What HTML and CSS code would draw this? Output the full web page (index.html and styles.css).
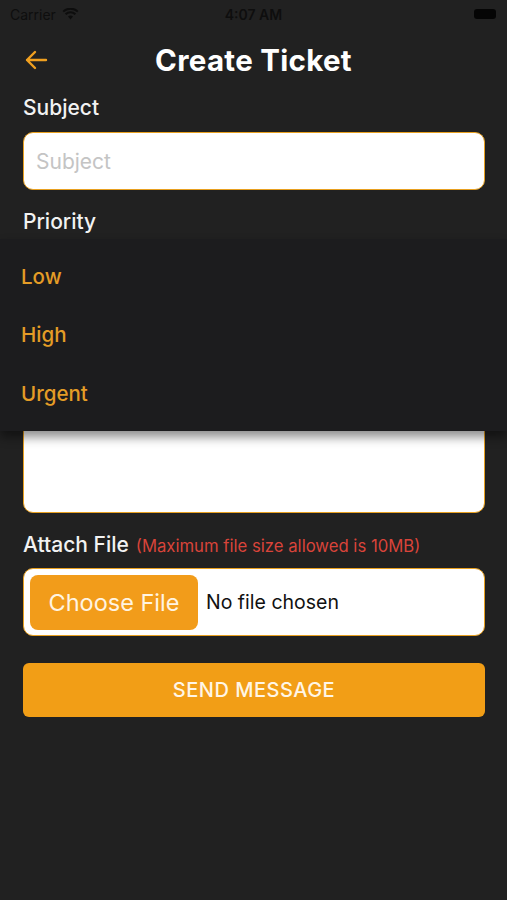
FILE: index.html
```html
<!DOCTYPE html>
<html>
<head>
<meta charset="utf-8">
<link rel="stylesheet" href="styles.css">
</head>
<body>
<div class="screen">
  <div class="status">
    <div class="status-left">
      <span class="carrier">Carrier</span>
      <svg class="wifi" width="17" height="12" viewBox="0 0 17 12"><path d="M8.5 11.5 L6 8.6 A3.6 3.6 0 0 1 11 8.6 Z" fill="#0d0d0d"/><path d="M3.6 6.2 A7 7 0 0 1 13.4 6.2" stroke="#0d0d0d" stroke-width="2" fill="none"/><path d="M1.2 3.6 A10.5 10.5 0 0 1 15.8 3.6" stroke="#0d0d0d" stroke-width="2" fill="none"/></svg>
    </div>
    <div class="time">4:07 AM</div>
    <div class="status-right"><span class="battery"></span></div>
  </div>

  <div class="header">
    <svg class="back" width="24" height="20" viewBox="0 0 24 20"><path d="M22 10 H3 M11 2 L3 10 L11 18" stroke="#f0a020" stroke-width="2.4" fill="none" stroke-linecap="round" stroke-linejoin="round"/></svg>
    <h1 class="title">Create Ticket</h1>
  </div>

  <form class="form">
    <label class="label">Subject</label>
    <div class="input"><span class="placeholder">Subject</span></div>

    <div class="priority-group">
      <label class="label">Priority</label>
      <div class="input select"></div>
      <div class="textarea"></div>

      <ul class="dropdown">
        <li>Low</li>
        <li>High</li>
        <li>Urgent</li>
      </ul>
    </div>

    <div class="attach-row">
      <span class="label">Attach File</span>
      <span class="hint">(Maximum file size allowed is 10MB)</span>
    </div>
    <div class="file-box">
      <span class="choose">Choose File</span>
      <span class="nofile">No file chosen</span>
    </div>

    <button type="button" class="send">SEND MESSAGE</button>
  </form>
</div>
</body>
</html>
```

FILE: styles.css
```css
* { box-sizing: border-box; }
html, body {
  margin: 0;
  padding: 0;
  background: #212121;
}
body {
  font-family: Inter, "Noto Sans", "Liberation Sans", sans-serif;
  width: 507px;
  height: 900px;
  overflow: hidden;
}
.screen {
  display: flex;
  flex-direction: column;
}
.status {
  height: 28px;
  display: flex;
  align-items: center;
  justify-content: space-between;
  padding: 0 10px;
  position: relative;
}
.status-left {
  display: flex;
  align-items: center;
  gap: 6px;
  width: 120px;
}
.carrier {
  font-size: 14px;
  color: #0e0e0e;
}
.time {
  font-size: 14px;
  font-weight: 600;
  color: #0e0e0e;
}
.status-right {
  width: 120px;
  display: flex;
  justify-content: flex-end;
}
.battery {
  width: 22px;
  height: 10px;
  background: #050505;
  border-radius: 3px;
  margin-right: 1px;
}
.header {
  height: 64px;
  display: flex;
  align-items: center;
  justify-content: center;
  position: relative;
}
.back {
  position: absolute;
  left: 24px;
  top: 22px;
}
.title {
  margin: 0;
  font-size: 29.5px;
  font-weight: 700;
  color: #ffffff;
  letter-spacing: 0.3px;
}
.form {
  display: flex;
  flex-direction: column;
  padding: 0 22px 0 23px;
}
.label {
  font-size: 21px;
  font-weight: 500;
  color: #f2f2f2;
  line-height: 24px;
}
.form > .label {
  margin-top: 4px;
  margin-bottom: 12px;
}
.input {
  height: 58px;
  background: #ffffff;
  border: 1.5px solid #e8a020;
  border-radius: 10px;
  display: flex;
  align-items: center;
  padding-left: 12px;
}
.placeholder {
  font-size: 21px;
  color: #c4c4c4;
}
.priority-group {
  position: relative;
  display: flex;
  flex-direction: column;
  padding-top: 20px;
}
.priority-group > .label {
  margin-bottom: 14px;
}
.priority-group .select {
  margin-bottom: 58px;
}
.textarea {
  height: 149px;
  background: #ffffff;
  border: 1.5px solid #e8a020;
  border-radius: 10px;
}
.dropdown {
  position: absolute;
  left: -23px;
  right: -22px;
  top: 49px;
  height: 192px;
  margin: 0;
  padding: 0;
  list-style: none;
  background: #1c1c1e;
  box-shadow: 0 6px 10px rgba(0, 0, 0, 0.45);
  display: flex;
  flex-direction: column;
  padding-top: 8px;
}
.dropdown li {
  height: 58.5px;
  display: flex;
  align-items: center;
  padding-left: 21px;
  font-size: 20.5px;
  font-weight: 500;
  color: #e49c26;
}
.attach-row {
  display: flex;
  align-items: baseline;
  gap: 7px;
  margin-top: 20px;
  margin-bottom: 11px;
}
.hint {
  font-size: 16.7px;
  color: #d9443a;
}
.file-box {
  height: 68px;
  background: #ffffff;
  border: 1.5px solid #e8a020;
  border-radius: 10px;
  display: flex;
  align-items: center;
  padding: 0 6px;
  gap: 8px;
}
.choose {
  width: 168px;
  height: 55px;
  background: #f29c1a;
  border-radius: 8px;
  display: flex;
  align-items: center;
  justify-content: center;
  font-size: 23.5px;
  color: #fff4e2;
}
.nofile {
  font-size: 19.5px;
  color: #111111;
}
.send {
  margin-top: 27px;
  height: 54px;
  border: none;
  border-radius: 6px;
  background: #f29e16;
  color: #fff6e6;
  font-family: inherit;
  font-size: 20px;
  font-weight: 500;
  letter-spacing: 0.5px;
}
```
